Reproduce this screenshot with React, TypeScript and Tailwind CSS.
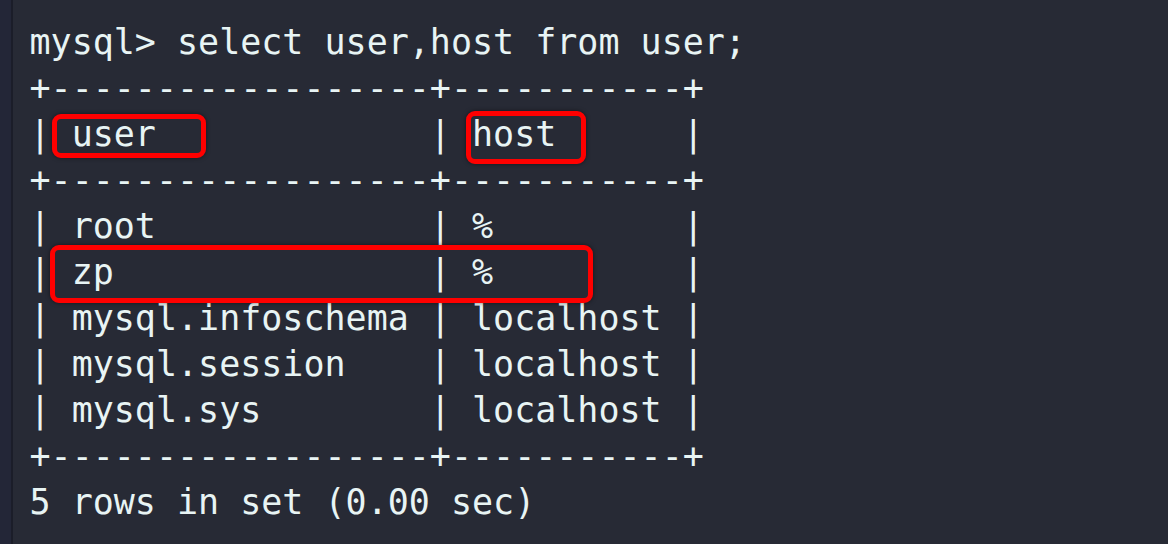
import React from "react";

const lines = [
  "mysql> select user,host from user;",
  "+------------------+-----------+",
  "| user             | host      |",
  "+------------------+-----------+",
  "| root             | %         |",
  "| zp               | %         |",
  "| mysql.infoschema | localhost |",
  "| mysql.session    | localhost |",
  "| mysql.sys        | localhost |",
  "+------------------+-----------+",
  "5 rows in set (0.00 sec)",
];

export default function App() {
  return (
    <div className="w-[1168px] h-[544px] flex bg-[#272a35] overflow-hidden">
      <div className="w-[11px] h-full bg-[#232637]" />
      <div className="w-[2px] h-full bg-[#1b1d29]" />
      <div className="relative flex-1 pl-[16.5px] pt-[19px]">
        <pre
          className="m-0 text-[35px] leading-[46px] text-[#e8f4f4]"
          style={{ fontFamily: '"DejaVu Sans Mono", "Liberation Mono", monospace' }}
        >
          {lines.map((l, i) => (
            <div key={i} className="h-[46px]">
              {l}
            </div>
          ))}
        </pre>
        <div className="absolute left-[39px] top-[114px] w-[154px] h-[44px] border-[5px] border-[#ff0000] rounded-[9px] shadow-[0_0_4px_rgba(0,0,0,0.5)]" />
        <div className="absolute left-[453px] top-[111px] w-[120px] h-[53px] border-[5px] border-[#ff0000] rounded-[9px] shadow-[0_0_4px_rgba(0,0,0,0.5)]" />
        <div className="absolute left-[37px] top-[245px] w-[543px] h-[58px] border-[5px] border-[#ff0000] rounded-[9px] shadow-[0_0_4px_rgba(0,0,0,0.5)]" />
      </div>
    </div>
  );
}
